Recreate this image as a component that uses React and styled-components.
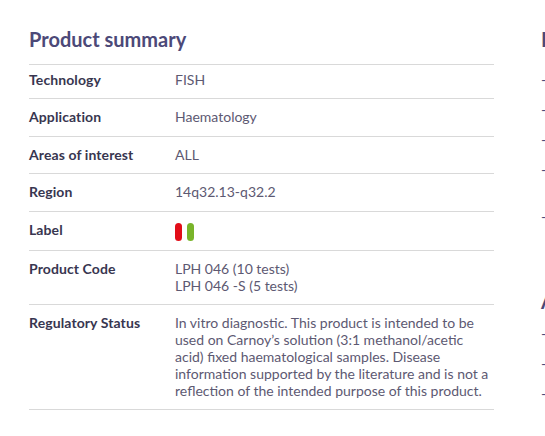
import React from 'react';
import styled, { createGlobalStyle } from 'styled-components';

const GlobalStyle = createGlobalStyle`
  html, body {
    margin: 0;
    padding: 0;
    background: #ffffff;
    overflow: hidden;
  }
  body {
    font-family: Lato, "Open Sans", sans-serif;
  }
`;

const Page = styled.div`
  display: flex;
  gap: 47px;
  padding: 27px 0 0 29px;
  width: 1000px;
`;

const Summary = styled.section`
  width: 465px;
  flex-shrink: 0;
`;

const Title = styled.h2`
  margin: 0 0 13px;
  font-size: 20px;
  line-height: 24px;
  font-weight: 700;
  color: #4c4978;
`;

const Table = styled.div`
  border-top: 1px solid #d9d9d9;
`;

const Row = styled.div`
  display: grid;
  grid-template-columns: 146px 1fr;
  padding: 10px 0 9.6px;
  border-bottom: 1px solid #d9d9d9;
  font-size: 14px;
  line-height: 1.2;

  &:first-child {
    padding-top: 7px;
  }
`;

const Label = styled.div`
  font-weight: 700;
  color: #383650;
  letter-spacing: 0.1px;
`;

const Value = styled.div`
  color: #5d5972;
  font-weight: 400;
  padding-right: 4px;
`;

const Pills = styled.div`
  display: flex;
  gap: 5px;
  padding-top: 1px;
`;

const Pill = styled.span`
  width: 7px;
  height: 18px;
  border-radius: 4px;
  background: ${p => p.color};
`;

const Side = styled.aside`
  width: 300px;
  flex-shrink: 0;
`;

const SideTitle = styled.h3`
  margin: 0 0 ${p => p.gap}px;
  font-size: 20px;
  line-height: 24px;
  font-weight: 700;
  color: #4c4978;
`;

const SideList = styled.ul`
  list-style: none;
  margin: 0 0 ${p => p.gap || 0}px;
  padding: 0;
  display: flex;
  flex-direction: column;
  gap: 13px;
`;

const SideItem = styled.li`
  display: flex;
  gap: 6px;
  font-size: 14px;
  line-height: 17px;
  color: #4c4978;
`;

const Dash = styled.span`
  flex-shrink: 0;
`;

const rows = [
  ['Technology', 'FISH'],
  ['Application', 'Haematology'],
  ['Areas of interest', 'ALL'],
  ['Region', '14q32.13-q32.2'],
];

const info = [
  'Instructions for use',
  'Safety data sheet',
  'Certificate of analysis',
  'Declaration of conformity for the product range',
  'Product brochure',
];

const apps = ['Haematology', 'Leukaemia', 'Lymphoma'];

export default function App() {
  return (
    <>
      <GlobalStyle />
      <Page>
        <Summary>
          <Title>Product summary</Title>
          <Table>
            {rows.map(([label, value]) => (
              <Row key={label}>
                <Label>{label}</Label>
                <Value>{value}</Value>
              </Row>
            ))}
            <Row>
              <Label>Label</Label>
              <Pills>
                <Pill color="#e20d18" />
                <Pill color="#79b42a" />
              </Pills>
            </Row>
            <Row>
              <Label>Product Code</Label>
              <Value>
                LPH 046 (10 tests)
                <br />
                LPH 046 -S (5 tests)
              </Value>
            </Row>
            <Row>
              <Label>Regulatory Status</Label>
              <Value>
                In vitro diagnostic. This product is intended to be used on Carnoy’s solution (3:1 methanol/acetic
                acid) fixed haematological samples. Disease information supported by the literature and is not a
                reflection of the intended purpose of this product.
              </Value>
            </Row>
          </Table>
        </Summary>
        <Side>
          <SideTitle gap={20}>Information</SideTitle>
          <SideList gap={64}>
            {info.map(item => (
              <SideItem key={item}>
                <Dash>-</Dash>
                <span>{item}</span>
              </SideItem>
            ))}
          </SideList>
          <SideTitle gap={12}>Applications</SideTitle>
          <SideList>
            {apps.map(item => (
              <SideItem key={item}>
                <Dash>-</Dash>
                <span>{item}</span>
              </SideItem>
            ))}
          </SideList>
        </Side>
      </Page>
    </>
  );
}
